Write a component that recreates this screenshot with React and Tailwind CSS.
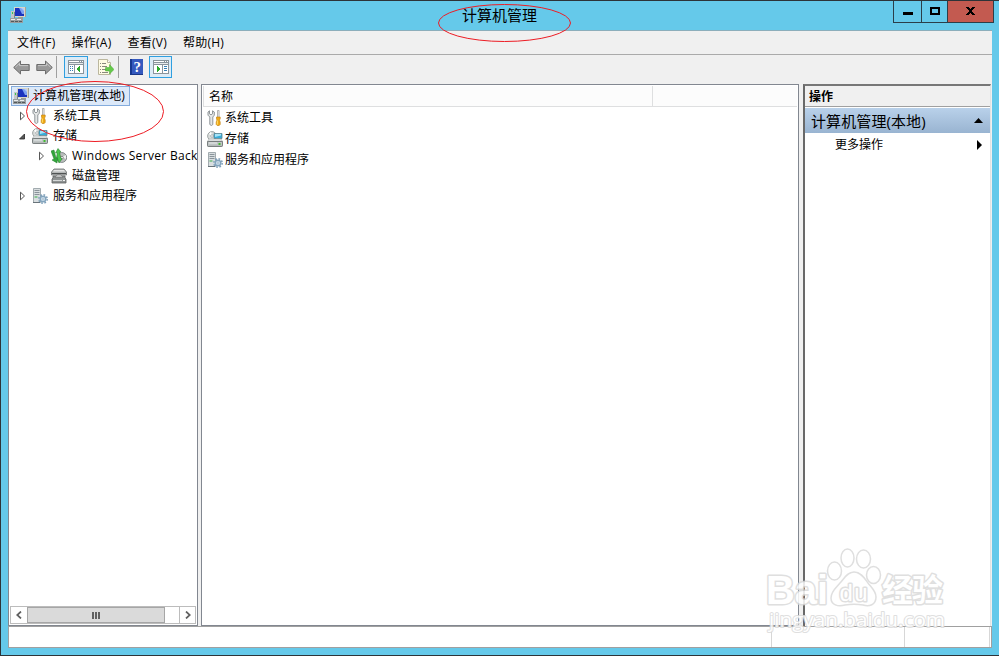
import React from 'react'

const ComputerIcon = () => (
   <svg width="16" height="16" viewBox="0 0 16 16" className="shrink-0">
      <path d="M4 0h12v10H4z" fill="#d8d6c8" />
      <path d="M5 1h9v8H5z" fill="#1b33bd" />
      <path d="M9 1h5v6h-2z" fill="#7ea2f2" />
      <path d="M11 1h3v3z" fill="#b3cbfa" />
      <path d="M15 0h1v10h-1z" fill="#a3a297" />
      <path d="M8 10h5v1H8z" fill="#9b9b91" />
      <path d="M1 4h4v7H1z" fill="#c2c6c8" />
      <path d="M4 5h1v6H4z" fill="#7c858a" />
      <path d="M2 5h1v2H2z" fill="#37c84b" />
      <path d="M0 11h13v5H0z" fill="#989ea0" />
      <path d="M1 12h4v1H1zM7 12h4v1H7z" fill="#eceeee" />
      <path d="M1 14h3v1H1zM5 14h3v1H5zM9 14h3v1H9z" fill="#54595b" />
   </svg>
)

const ToolsIcon = () => (
   <svg width="16" height="16" viewBox="0 0 16 16" className="shrink-0">
      <path
         d="M2.500.8v3l1.500 1 1.500-1v-3L7.300 2v3.200L5.800 7v7.500l-1.400 1-1.600-1V7L1 5.200V2z"
         fill="#e5e7e7"
         stroke="#858b8e"
         strokeWidth=".9"
      />
      <path d="M10.500.5h1.600v7h-1.600z" fill="#ececec" stroke="#8a8a8a" strokeWidth=".6" />
      <path d="M9.500 7h3.700v2l-.8 1 .8 2v2.500l-1 1h-2l-1-1V12l.8-2-.5-1z" fill="#efaa16" stroke="#bd7b0b" strokeWidth=".6" />
      <path d="M10.400 10.500v4" stroke="#ffdc67" />
   </svg>
)

const StorageIcon = () => (
   <svg width="16" height="16" viewBox="0 0 16 16" className="shrink-0">
      <circle cx="5" cy="5" r="4.400" fill="#dadddc" stroke="#8b9393" strokeWidth=".8" />
      <path d="M2 3l3 2L4 .8z" fill="#fff" />
      <circle cx="5" cy="5" r="1.300" fill="#fff" stroke="#949b9b" strokeWidth=".7" />
      <path d="M7 2.500h8v5H7z" fill="#36abd8" stroke="#5d8491" strokeWidth=".8" />
      <path d="M8 3h6v1.500L8 6z" fill="#a5e3f7" />
      <path d="M2 8h12l2 3H0z" fill="#e9ebeb" stroke="#989d9d" strokeWidth=".5" />
      <rect x=".4" y="10.400" width="15.200" height="5" rx=".8" fill="#bfc4c4" stroke="#626969" strokeWidth=".9" />
      <path d="M2 12h8" stroke="#e8ebeb" />
      <path d="M11.500 12h2v2h-2z" fill="#42bb33" />
   </svg>
)

const BackupIcon = () => (
   <svg width="16" height="16" viewBox="0 0 16 16" className="shrink-0">
      <circle cx="10.700" cy="9.500" r="5" fill="#b8bcbb" stroke="#6f7777" strokeWidth=".8" />
      <path d="M11 9l4-2v4z" fill="#eff1f1" />
      <circle cx="11" cy="9.600" r="1.300" fill="#f8f8f8" stroke="#666" strokeWidth=".7" />
      <path d="M0 3l3-1 2 8 2-1-1 6-5-3 2-1z" fill="#31a63a" stroke="#207929" strokeWidth=".5" />
      <path d="M7 .5l3 3.500-1.500.3L9.800 10 11 11l-3 4-2-6V4.500L4.500 5z" fill="#49c64c" stroke="#207929" strokeWidth=".5" />
   </svg>
)

const DiskIcon = () => (
   <svg width="16" height="16" viewBox="0 0 16 16" className="shrink-0">
      <path d="M3 1h10l2.500 3v3H.5V4z" fill="#b5b8b8" stroke="#6c7070" strokeWidth=".8" />
      <path d="M3 2h10l1 1.500H2z" fill="#e4e4e4" />
      <path d="M1 5.500h14" stroke="#505353" />
      <path d="M2 8h12v2l1 1v4H1v-4l1-1z" fill="#8f9393" stroke="#5d6161" strokeWidth=".8" />
      <path d="M4 9.500L6 7h4l2 2.500-2-.5H6z" fill="#e7e9e9" stroke="#646767" strokeWidth=".6" />
      <path d="M2 12.500h9" stroke="#d5d8d8" />
      <path d="M12 12h2v1h-2z" fill="#f4f4f4" />
   </svg>
)

const ServiceIcon = () => (
   <svg width="16" height="16" viewBox="0 0 16 16" className="shrink-0">
      <path d="M1.500.5h7v14h-7z" fill="#d9dee0" stroke="#9aa3a7" strokeWidth=".9" />
      <path d="M2.500 2.500h5M2.500 4.500h5M2.500 6.500h5" stroke="#8a949a" />
      <path d="M2.500 8.500h3v1h-3z" fill="#38ad49" />
      <path d="M1 14.500h7" stroke="#68737a" />
      <circle cx="11" cy="11" r="4.200" fill="none" stroke="#7e9fb9" strokeWidth="1.500" strokeDasharray="1.700 1.600" />
      <circle cx="11" cy="11" r="2.800" fill="#d3e4f0" stroke="#83a4bd" strokeWidth="1.400" />
      <circle cx="11" cy="11" r="1" fill="#fff" stroke="#6b8faa" strokeWidth=".5" />
   </svg>
)

const ArrowIcon = ({ flip }) => (
   <svg width="17" height="15" viewBox="0 0 17 15" className={flip ? '-scale-x-100' : ''}>
      <path d="M.7 7.500L7.500 1v3.500h8.700v6H7.500V14z" fill="#999" stroke="#6c6c6c" />
      <path d="M2.300 7.300l4.200-4v2.300h8.500" fill="none" stroke="#c7c7c7" />
   </svg>
)

const PaneIcon = ({ flip }) => (
   <svg width="16" height="14" viewBox="0 0 16 14" shapeRendering="crispEdges">
      <path d="M0 0h16v14H0z" fill="#8a949c" />
      <path d="M1 1h10v1H1zM12 1h1v1h-1zM14 1h1v1h-1z" fill="#fff" />
      <path d="M1 3h14v1H1z" fill="#e8ebed" />
      {flip ? (
         <>
            <path d="M1 5h8v8H1zM10 5h5v8h-5z" fill="#fff" />
            <path d="M4 6l4 3-4 3z" fill="#2bab2b" />
            <path d="M11 6h3v1h-3zM11 8h3v1h-3zM11 10h3v1h-3z" fill="#377fb5" />
         </>
      ) : (
         <>
            <path d="M1 5h5v8H1zM7 5h8v8H7z" fill="#fff" />
            <path d="M12 6L8 9l4 3z" fill="#2bab2b" />
            <path d="M2 6h1v1H2zM4 6h1v1H4zM2 8h1v1H2zM4 8h1v1H4zM2 10h1v1H2zM4 10h1v1H4z" fill="#377fb5" />
         </>
      )}
   </svg>
)

const ExportIcon = () => (
   <svg width="16" height="16" viewBox="0 0 16 16">
      <path d="M.5.5h9l3 3v12H.5z" fill="#fffbe4" stroke="#bbb79e" />
      <path d="M9.500.5v3h3" fill="#fff" stroke="#bbb79e" />
      <path d="M2 4.500h1M4 4.500h4M2 7.500h1M4 7.500h5M2 10.500h1M4 10.500h4M2 13.500h1M4 13.500h6" stroke="#8a887d" />
      <path d="M7.500 8.500h4v-3l4.500 5-4.500 4.500v-3h-4z" fill="#65c94b" stroke="#49a831" strokeWidth=".5" />
   </svg>
)

const HelpIcon = () => (
   <svg width="13" height="16" viewBox="0 0 13 16">
      <path d="M0 0h13v16H0z" fill="#3559be" />
      <path d="M0 0h2v16H0z" fill="#18388f" />
      <path d="M2 15h11v1H2z" fill="#1b3785" />
      <text x="7.300" y="13" textAnchor="middle" fontSize="15" fontWeight="bold" fill="#fff" fontFamily="Liberation Serif">
         ?
      </text>
   </svg>
)

const Expander = ({ open }) => (
   <svg width="7" height="10" viewBox="0 0 7 10" className="shrink-0">
      {open ? (
         <path d="M5.500 3v5h-5z" fill="#595959" stroke="#262626" strokeWidth=".8" />
      ) : (
         <path d="M1.500 1.200v7.600L5.500 5z" fill="#fff" stroke="#444" strokeWidth=".9" />
      )}
   </svg>
)

const items = [
   { label: '系统工具', icon: <ToolsIcon /> },
   { label: '存储', icon: <StorageIcon /> },
   { label: '服务和应用程序', icon: <ServiceIcon /> },
]

const TreeRow = ({ icon, label, open, leaf, child, latin }) => (
   <div className={`flex h-5 items-center ${child ? 'pl-[28px]' : 'pl-[9px]'}`}>
      <div className="flex w-[13px] shrink-0">{!leaf && <Expander open={open} />}</div>
      {icon}
      <span className={`ml-[5px] whitespace-nowrap ${latin ? 'tracking-[0.32px]' : ''}`}>{label}</span>
   </div>
)

const TitleBar = () => (
   <header className="flex h-[29px] items-start">
      <div className="pt-[6px] pl-[9px]">
         <ComputerIcon />
      </div>
      <h1 className="grow pt-[3px] pl-[436px] text-[15px] leading-[22px] whitespace-nowrap">计算机管理</h1>
      <div className="mr-[5px] flex h-[22px] border-x border-b border-[#2b3e49]">
         <button className="flex w-[27px] justify-center pt-[11px]">
            <span className="h-[3px] w-[10px] bg-black" />
         </button>
         <button className="flex w-[27px] justify-center border-x border-[#2b3e49] pt-[6px]">
            <span className="h-2 w-[10px] border-2 border-black" />
         </button>
         <button className="flex w-[45px] justify-center bg-[#c35a50] pt-[6px]">
            <svg width="9" height="8" viewBox="0 0 9 8" shapeRendering="crispEdges">
               <path d="M0 0h3l1.500 2L6 0h3L6 4l3 4H6L4.500 6 3 8H0l3-4z" />
            </svg>
         </button>
      </div>
   </header>
)

const Toolbar = () => (
   <div className="flex h-[29px] items-center pb-[5px] pl-[5px]">
      <ArrowIcon />
      <div className="ml-[6px]">
         <ArrowIcon flip />
      </div>
      <div className="ml-[3px] h-[22px] w-px bg-[#a0a0a0]" />
      <div className="ml-[7px] flex h-[22px] w-6 items-center justify-center border border-[#2f9fe0] bg-[#dcebf6]">
         <PaneIcon />
      </div>
      <div className="ml-[10px]">
         <ExportIcon />
      </div>
      <div className="ml-1 h-[22px] w-px bg-[#a0a0a0]" />
      <div className="ml-[11px]">
         <HelpIcon />
      </div>
      <div className="ml-[6px] flex h-[22px] w-[23px] items-center justify-center border border-[#2f9fe0] bg-[#dcebf6]">
         <PaneIcon flip />
      </div>
   </div>
)

const ScrollBar = () => (
   <div className="mx-px mb-px flex h-[18px] border border-[#bcbcbc] bg-white">
      <div className="flex w-4 items-center justify-center">
         <svg width="6" height="8" viewBox="0 0 6 8">
            <path d="M5 .5L1.200 4 5 7.500" fill="none" stroke="#606060" strokeWidth="1.700" />
         </svg>
      </div>
      <div className="flex w-[138px] items-center justify-center gap-px border border-[#a6a6a6] bg-[#dadada]">
         <span className="h-[7px] w-[2px] bg-[#606060]" />
         <span className="h-[7px] w-[2px] bg-[#606060]" />
         <span className="h-[7px] w-[2px] bg-[#606060]" />
      </div>
      <div className="grow" />
      <div className="flex w-4 items-center justify-center border-l border-[#bcbcbc]">
         <svg width="6" height="8" viewBox="0 0 6 8">
            <path d="M1 .5L4.800 4 1 7.500" fill="none" stroke="#606060" strokeWidth="1.700" />
         </svg>
      </div>
   </div>
)

const Tree = () => (
   <aside className="flex w-[190px] shrink-0 flex-col overflow-hidden border border-[#828790] bg-white">
      <div className="grow pt-px pl-[2px]">
         <div className="flex h-5 w-[119px] items-center border border-[#84acdd] bg-[#dce9f9] pl-px">
            <ComputerIcon />
            <span className="ml-[4px] tracking-[0.1px] whitespace-nowrap">计算机管理(本地)</span>
         </div>
         <div className="-ml-px">
            <TreeRow {...items[0]} />
            <TreeRow {...items[1]} open />
            <TreeRow icon={<BackupIcon />} label="Windows Server Back" child latin />
            <TreeRow icon={<DiskIcon />} label="磁盘管理" child leaf />
            <TreeRow {...items[2]} />
         </div>
      </div>
      <ScrollBar />
   </aside>
)

const List = () => (
   <main className="ml-[3px] w-[598px] shrink-0 border border-[#828790] bg-white p-px">
      <div className="flex h-[21px] items-center border-b border-[#dedfe0] bg-[#fcfcfc]">
         <div className="flex h-full w-[450px] items-center border-x border-[#dedfe0] pt-[2px] pl-[5px]">名称</div>
      </div>
      {items.map((item) => (
         <div key={item.label} className="flex h-[21px] items-center gap-[2px] pl-1">
            {item.icon}
            <span className="pt-px">{item.label}</span>
         </div>
      ))}
   </main>
)

const Actions = () => (
   <section className="ml-[4px] w-[188px] shrink-0 border-t-2 border-r border-l-2 border-t-[#777] border-r-[#e3e3e3] border-l-[#696969] bg-white">
      <div className="flex h-[21px] items-center border-b border-[#a0a0a0] bg-[#f0f0f0] pt-px pl-[4px] font-bold">操作</div>
      <div className="mt-px flex h-[25px] items-center justify-between bg-linear-to-b from-[#b9d1ea] to-[#99b4d1] pr-[7px] pl-[6px] text-[15px]">
         <span className="tracking-[0.1px]">计算机管理(本地)</span>
         <svg width="9" height="5" viewBox="0 0 9 5">
            <path d="M0 5l4.500-5L9 5z" />
         </svg>
      </div>
      <div className="flex h-6 items-center justify-between pr-[8px] pl-[30px]">
         更多操作
         <svg width="5" height="10" viewBox="0 0 5 10">
            <path d="M0 0l5 5-5 5z" />
         </svg>
      </div>
   </section>
)

const Watermark = () => (
   <svg className="pointer-events-none absolute top-[539px] left-[759px]" width="195" height="96" viewBox="0 0 195 96">
      <g fill="#fff" stroke="#dadada" strokeWidth="1.500" strokeLinejoin="round" opacity=".85">
         <ellipse cx="74.500" cy="31" rx="7" ry="9" />
         <ellipse cx="87.500" cy="18" rx="6.500" ry="9" />
         <ellipse cx="103.500" cy="19" rx="7" ry="9" />
         <ellipse cx="113.500" cy="35" rx="7" ry="8.500" />
         <path d="M94 32c7 0 11 7 14 11s8 8 8 14c0 8-7 10-13 8-6-1-12-1-18 0-7 2-14 0-14-7 0-7 5-10 9-15 4-4 7-11 14-11z" />
         <g fontFamily="Liberation Sans" fontWeight="bold" paintOrder="stroke" strokeWidth="3">
            <text x="6" y="64" fontSize="40" textLength="62" lengthAdjust="spacingAndGlyphs">
               Bai
            </text>
            <text x="79.500" y="61" fontSize="24" fontWeight="normal" textLength="28">
               du
            </text>
            <text x="122" y="61" fontSize="31" fontFamily="Noto Sans CJK SC" textLength="61">
               经验
            </text>
         </g>
         <text
            x="9"
            y="87"
            fontSize="20"
            fontFamily="Open Sans"
            paintOrder="stroke"
            strokeWidth="2"
            textLength="176"
            lengthAdjust="spacingAndGlyphs"
         >
            jingyan.baidu.com
         </text>
      </g>
   </svg>
)

const App = () => {
   return (
      <div className="relative flex h-[656px] w-[999px] flex-col overflow-hidden border-t border-b border-l border-[#2d3338] bg-[#65c9ea] font-['Open_Sans','Noto_Sans_CJK_SC',sans-serif] text-[12px] leading-4 text-black">
         <TitleBar />
         <div className="mr-[7px] ml-[7px] flex h-[618px] flex-col border-t border-[#8caebb] bg-[#f0f0f0]">
            <nav className="flex h-6 items-center gap-4 border-b border-[#aaa] pl-[9px] tracking-[0.25px]">
               <span>文件(F)</span>
               <span>操作(A)</span>
               <span>查看(V)</span>
               <span>帮助(H)</span>
            </nav>
            <Toolbar />
            <div className="flex h-[542px]">
               <Tree />
               <List />
               <Actions />
            </div>
            <footer className="flex h-[22px] border border-[#a0a0a0] bg-white">
               <div className="w-[763px] border-r border-[#d7d7d7]" />
               <div className="w-[133px] border-r border-[#d7d7d7]" />
               <div className="mr-px grow border-r border-[#d7d7d7]" />
            </footer>
         </div>
         <Watermark />
         {/* red markings over the title and the tree root */}
         <svg className="pointer-events-none absolute -top-px -left-px" width="600" height="150" fill="none" stroke="#ed1c24">
            <ellipse cx="504.500" cy="23" rx="66" ry="18.500" />
            <ellipse cx="95" cy="111.500" rx="68.500" ry="30" />
         </svg>
      </div>
   )
}

export default App
